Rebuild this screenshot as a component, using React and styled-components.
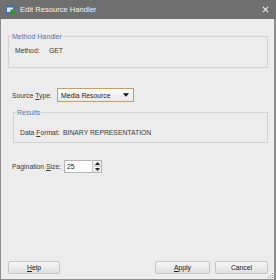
import React from 'react'
import styled, { createGlobalStyle } from 'styled-components'

const Global = createGlobalStyle`
    html, body { margin: 0; padding: 0; background: #ececec; }
    * { box-sizing: border-box; }
`

const App = () => {
    return (
        <Window>
            <Global />
            <TitleBar>
                <AppIcon viewBox="0 0 9 9">
                    <rect x="0.5" y="0.5" width="7" height="7" fill="#dfe8f5" stroke="#3e6db5" />
                    <rect x="0.5" y="0.5" width="7" height="2" fill="#3e6db5" />
                    <circle cx="6.5" cy="6.5" r="2.3" fill="#2e9a2e" />
                </AppIcon>
                <Title>Edit Resource Handler</Title>
                <Close viewBox="0 0 8 8">
                    <path d="M1 1 L7 7 M7 1 L1 7" stroke="#f2f2f2" strokeWidth="1.2" />
                </Close>
            </TitleBar>
            <Body>
                <Group $left={0} $top={13} $height={36}>
                    <Legend>Method Handler</Legend>
                    <Row $indent={6} $top={6}>
                        <Label $width={34}>Method:</Label>
                        <Value>GET</Value>
                    </Row>
                </Group>
                <Row $indent={4} $top={20}>
                    <Label $width={45}>Source <u>T</u>ype:</Label>
                    <Select>
                        <span>Media Resource</span>
                        <Arrow viewBox="0 0 7 4"><path d="M0 0 H7 L3.5 4 Z" fill="#111" /></Arrow>
                    </Select>
                </Row>
                <Group $left={5} $top={6} $height={35}>
                    <Legend>Results</Legend>
                    <Row $indent={6} $top={12}>
                        <Label $width={43}>Data <u>F</u>ormat:</Label>
                        <Value>BINARY REPRESENTATION</Value>
                    </Row>
                </Group>
                <Row $indent={4} $top={17}>
                    <Label $width={52}>Pagination <u>S</u>ize:</Label>
                    <Spinner>
                        <SpinText>25</SpinText>
                        <SpinButtons>
                            <SpinButton><svg width="5" height="3" viewBox="0 0 5 3"><path d="M0 3 H5 L2.5 0 Z" fill="#222" /></svg></SpinButton>
                            <SpinButton><svg width="5" height="3" viewBox="0 0 5 3"><path d="M0 0 H5 L2.5 3 Z" fill="#222" /></svg></SpinButton>
                        </SpinButtons>
                    </Spinner>
                </Row>
                <Footer>
                    <Button $width={52}><u>H</u>elp</Button>
                    <Spacer />
                    <Button $width={55}><u>A</u>pply</Button>
                    <Button $width={53}>Cancel</Button>
                </Footer>
            </Body>
            <Grip viewBox="0 0 6 6">
                <rect x="4" y="0" width="1" height="1" fill="#999" />
                <rect x="2" y="2" width="1" height="1" fill="#999" />
                <rect x="4" y="2" width="1" height="1" fill="#999" />
                <rect x="0" y="4" width="1" height="1" fill="#999" />
                <rect x="2" y="4" width="1" height="1" fill="#999" />
                <rect x="4" y="4" width="1" height="1" fill="#999" />
            </Grip>
        </Window>
    )
}

const Window = styled.div`
    position: relative;
    width: 276px;
    height: 280px;
    display: flex;
    flex-direction: column;
    background: #ececec;
    border-left: 1px solid #8c8c8c;
    border-right: 2px solid #8c8c8c;
    border-bottom: 1px solid #8c8c8c;
    font-family: "Liberation Sans", Arial, sans-serif;
    font-size: 6.8px;
    color: #3a3a3a;
`
const TitleBar = styled.div`
    height: 19px;
    margin: 0 -2px 0 -1px;
    background: #6f6f6f;
    display: flex;
    align-items: center;
    padding: 0 7px 0 6px;
    flex: 0 0 auto;
`
const AppIcon = styled.svg`
    width: 9px;
    height: 9px;
    flex: 0 0 auto;
`
const Title = styled.span`
    margin-left: 5px;
    color: #f4f4f4;
    font-size: 7.6px;
    flex: 1 1 0%;
`
const Close = styled.svg`
    width: 7px;
    height: 7px;
`
const Body = styled.div`
    flex: 1 1 0%;
    display: flex;
    flex-direction: column;
    padding: 0 6px 5px 7px;
`
const Group = styled.fieldset`
    margin: ${({$top}) => $top}px 0 0 ${({$left}) => $left}px;
    height: ${({$height}) => $height}px;
    padding: 0;
    border: 1px solid #d2d2d2;
    min-width: 0;
`
const Legend = styled.legend`
    padding: 0 1px;
    margin-left: 2px;
    color: #4a76b0;
    font-size: 7px;
    line-height: 9px;
`
const Row = styled.div`
    display: flex;
    align-items: center;
    margin: ${({$top}) => $top}px 0 0 ${({$indent}) => $indent}px;
`
const Label = styled.span`
    width: ${({$width}) => $width}px;
    flex: 0 0 auto;
    white-space: nowrap;
    u { text-decoration: underline; }
`
const Value = styled.span`
    white-space: nowrap;
`
const Select = styled.div`
    width: 77px;
    height: 14px;
    display: flex;
    align-items: center;
    justify-content: space-between;
    padding: 0 4px 0 3px;
    border: 1px solid #c9a064;
    background: linear-gradient(#fdfdfd, #e9e9e9);
    color: #222;
`
const Arrow = styled.svg`
    width: 6px;
    height: 4px;
`
const Spinner = styled.div`
    width: 38px;
    height: 13px;
    display: flex;
    border: 1px solid #b5b5b5;
    background: #fff;
`
const SpinText = styled.span`
    flex: 1 1 0%;
    padding-left: 2px;
    line-height: 11px;
    color: #222;
`
const SpinButtons = styled.div`
    width: 9px;
    display: flex;
    flex-direction: column;
    border-left: 1px solid #c8c8c8;
`
const SpinButton = styled.div`
    flex: 1 1 0%;
    display: flex;
    align-items: center;
    justify-content: center;
    background: linear-gradient(#f8f8f8, #e2e2e2);
    & + & { border-top: 1px solid #cfcfcf; }
`
const Footer = styled.div`
    margin-top: auto;
    display: flex;
    align-items: center;
    gap: 5px;
`
const Spacer = styled.div`
    flex: 1 1 0%;
`
const Button = styled.div`
    width: ${({$width}) => $width}px;
    height: 13px;
    display: flex;
    align-items: center;
    justify-content: center;
    border: 1px solid #c6c6c6;
    border-radius: 2px;
    background: linear-gradient(#f7f7f7, #dedede);
    color: #222;
`
const Grip = styled.svg`
    position: absolute;
    right: 0;
    bottom: 0;
    width: 6px;
    height: 6px;
`

export default App
